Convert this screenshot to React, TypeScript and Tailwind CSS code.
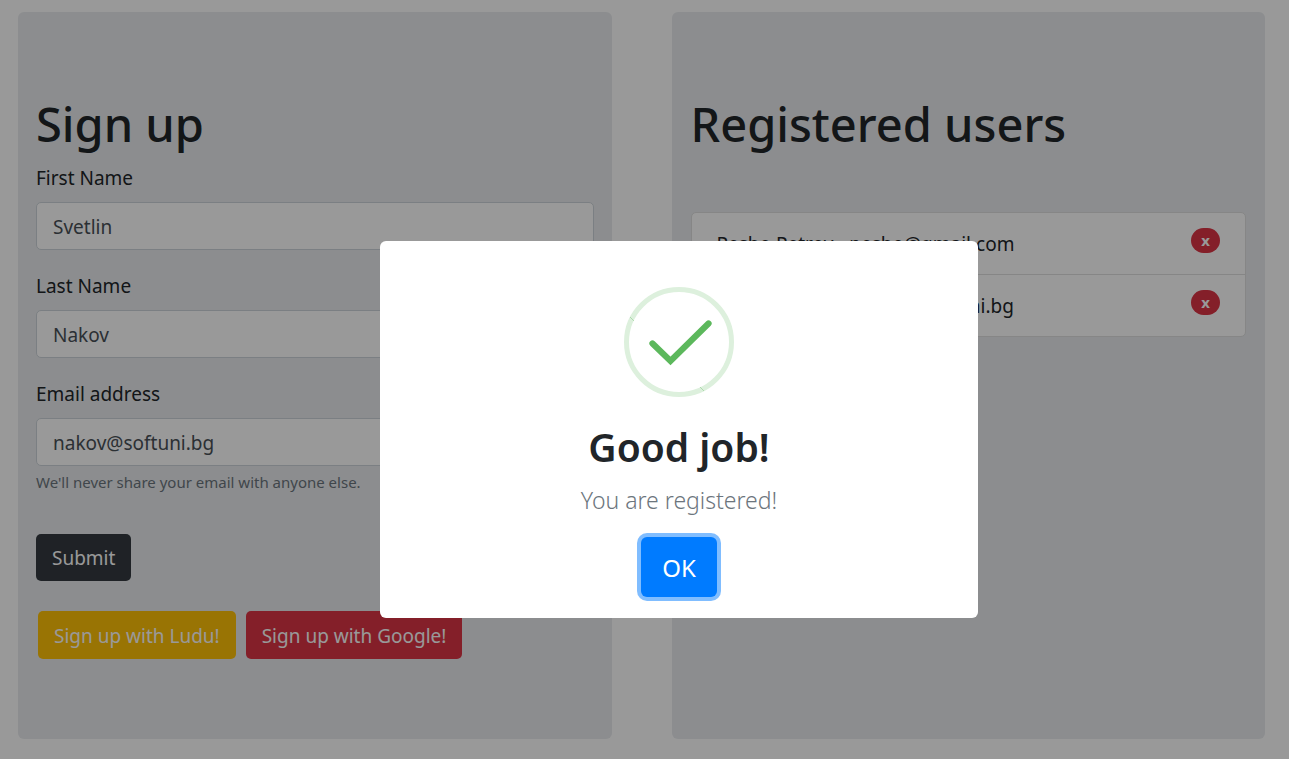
import React, { useState } from "react";

type FieldProps = {
  id: string;
  label: string;
  type?: string;
  initial: string;
  hint?: string;
};

function Field({ id, label, type = "text", initial, hint }: FieldProps) {
  const [value, setValue] = useState(initial);
  return (
    <div className="mb-5">
      <label htmlFor={id} className="mb-2 block text-[19px] leading-8">
        {label}
      </label>
      <input
        id={id}
        type={type}
        value={value}
        onChange={(e) => setValue(e.target.value)}
        className="block h-12 w-full rounded-[5px] border border-[#ced4da] bg-white px-4 pt-0.5 text-[19px] text-[#495057]"
      />
      {hint && <small className="mt-1 block text-[15px] leading-6 text-[#6c757d]">{hint}</small>}
    </div>
  );
}

const users = ["Pesho Petrov - pesho@gmail.com", "Svetlin Nakov - nakov@softuni.bg"];

function SuccessIcon() {
  return (
    <svg viewBox="0 0 110 110" className="mx-auto size-[110px]" fill="none" aria-hidden="true">
      <circle cx="55" cy="55" r="52.5" stroke="#ddf0dd" strokeWidth="5" />
      <path d="M6 30l4 4M76 100l4 4" stroke="#74bf74" strokeWidth="0.8" strokeDasharray="0.8 0.6" />
      <path d="M28.5 56.5L46.5 74L84.5 36.5" stroke="#5cb85c" strokeWidth="6.25" strokeLinecap="round" />
    </svg>
  );
}

export default function App() {
  const buttonClass = "h-12 rounded-[5px] px-4 pt-0.5 text-[19px] text-white";
  return (
    <div className="min-h-screen bg-white font-['Noto_Sans','Open_Sans',sans-serif] text-[#212529]">
      <main className="grid grid-cols-2 gap-[60px] pt-3 pr-6 pb-5 pl-[18px]">
        <section className="rounded-md bg-[#e9ecef] px-[18px] py-20">
          <h1 className="mb-1.5 text-[47px] leading-[64px] font-medium">Sign up</h1>
          <form onSubmit={(e) => e.preventDefault()}>
            <Field id="first-name" label="First Name" initial="Svetlin" />
            <Field id="last-name" label="Last Name" initial="Nakov" />
            <Field
              id="email"
              label="Email address"
              type="email"
              initial="nakov@softuni.bg"
              hint="We'll never share your email with anyone else."
            />
            <button type="submit" className="mt-5 h-[47px] rounded-[5px] bg-[#343a40] px-4 pt-0.5 text-[19px] text-white">
              Submit
            </button>
          </form>
          <div className="mt-[30px] flex gap-2.5 pl-0.5">
            <button type="button" className={`${buttonClass} bg-[#ffc107]`}>
              Sign up with Ludu!
            </button>
            <button type="button" className={`${buttonClass} bg-[#dc3545]`}>
              Sign up with Google!
            </button>
          </div>
        </section>

        <section className="rounded-md bg-[#e9ecef] px-[19px] py-20">
          <h1 className="mb-14 text-[47px] leading-[64px] font-medium">Registered users</h1>
          <ul className="divide-y divide-[#dfdfdf] rounded-[5px] border border-[#dfdfdf] bg-white">
            {users.map((user) => (
              <li key={user} className="flex items-start justify-between px-[25px] pt-[15px] pb-[14px]">
                <span className="text-[19px] leading-8">{user}</span>
                <button
                  type="button"
                  aria-label={`Remove ${user}`}
                  className="h-[25px] w-[29px] rounded-full bg-[#dc3545] text-[15px] leading-[25px] font-bold text-white"
                >
                  x
                </button>
              </li>
            ))}
          </ul>
        </section>
      </main>

      <div className="fixed inset-0 flex items-center justify-center bg-black/40 pt-[100px] pl-[69px]">
        <div role="dialog" aria-modal="true" aria-labelledby="dialog-title" className="w-[598px] rounded-md bg-white pt-[46px] pb-[21px] text-center">
          <SuccessIcon />
          <h2 id="dialog-title" className="mt-[26px] text-[39px] leading-[48px] font-semibold">
            Good job!
          </h2>
          <p className="mt-[11px] text-[23px] leading-9 font-light text-[#6c757d]">You are registered!</p>
          <button type="button" className="mt-[19px] h-[60px] rounded-md bg-[#007bff] px-[21px] pt-0.5 text-[24px] text-white ring-4 ring-[#80bdff]">
            OK
          </button>
        </div>
      </div>
    </div>
  );
}
